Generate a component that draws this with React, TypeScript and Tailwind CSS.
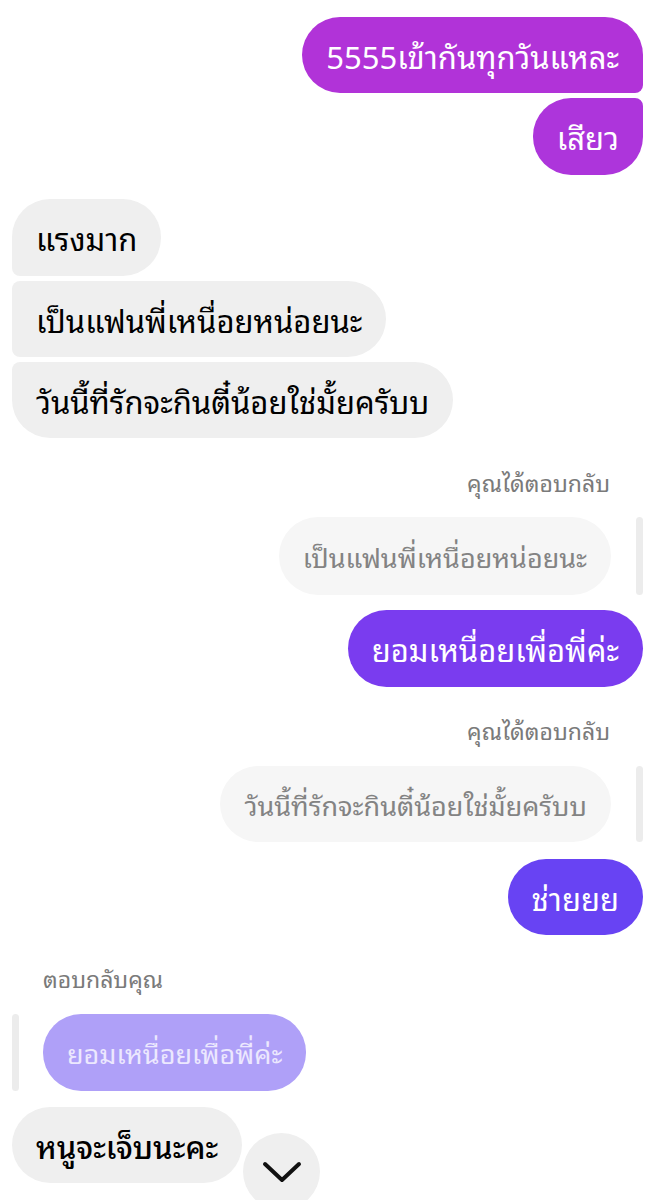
import React from "react";

const font = { fontFamily: '"Noto Sans Thai Looped", "Noto Sans", "Liberation Sans", sans-serif' };

function Bar() {
  return <div className="w-[7px] self-stretch rounded-full bg-[#ececec]" />;
}

export default function App() {
  return (
    <div className="relative w-[659px] h-[1200px] overflow-hidden bg-white" style={font}>
      <div className="flex flex-col pt-[17px] pr-[16px] pl-[12px]">
        <div className="flex flex-col items-end gap-[5px]">
          <div className="h-[76px] flex items-center px-[24px] bg-[#b133d8] text-white text-[31px] rounded-[38px] rounded-br-[8px]">
            5555เข้ากันทุกวันแหละ
          </div>
          <div className="h-[77px] flex items-center px-[24px] bg-[#ad35db] text-white text-[31px] rounded-[38px] rounded-tr-[8px]">
            เสียว
          </div>
        </div>

        <div className="flex flex-col items-start gap-[5px] mt-[24px]">
          <div className="h-[77px] flex items-center px-[24px] bg-[#efefef] text-black text-[31px] rounded-[38px] rounded-bl-[8px]">
            แรงมาก
          </div>
          <div className="h-[76px] flex items-center px-[24px] bg-[#efefef] text-black text-[31px] rounded-[38px] rounded-tl-[8px] rounded-bl-[8px]">
            เป็นแฟนพี่เหนื่อยหน่อยนะ
          </div>
          <div className="h-[76px] flex items-center px-[24px] bg-[#efefef] text-black text-[31px] rounded-[38px] rounded-tl-[8px]">
            วันนี้ที่รักจะกินตี๋น้อยใช่มั้ยครับบ
          </div>
        </div>

        <div className="flex justify-end mt-[28px] pr-[33px] h-[32px] items-center text-[23px] text-[#7a7a7a]">
          คุณได้ตอบกลับ
        </div>
        <div className="flex justify-end mt-[19px] gap-[25px]">
          <div className="h-[78px] flex items-center px-[24px] bg-[#f6f6f6] text-[#838383] text-[27px] rounded-[39px]">
            เป็นแฟนพี่เหนื่อยหน่อยนะ
          </div>
          <Bar />
        </div>
        <div className="flex justify-end mt-[15px]">
          <div className="h-[77px] flex items-center px-[24px] bg-[#7a3cef] text-white text-[31px] rounded-[39px]">
            ยอมเหนื่อยเพื่อพี่ค่ะ
          </div>
        </div>

        <div className="flex justify-end mt-[27px] pr-[33px] h-[32px] items-center text-[23px] text-[#7a7a7a]">
          คุณได้ตอบกลับ
        </div>
        <div className="flex justify-end mt-[20px] gap-[25px]">
          <div className="h-[76px] flex items-center px-[24px] bg-[#f6f6f6] text-[#838383] text-[27px] rounded-[38px]">
            วันนี้ที่รักจะกินตี๋น้อยใช่มั้ยครับบ
          </div>
          <Bar />
        </div>
        <div className="flex justify-end mt-[17px]">
          <div className="h-[76px] flex items-center px-[24px] bg-[#6843f3] text-white text-[31px] rounded-[38px]">
            ช่ายยย
          </div>
        </div>

        <div className="flex justify-start mt-[27px] pl-[31px] h-[32px] items-center text-[23px] text-[#7a7a7a]">
          ตอบกลับคุณ
        </div>
        <div className="flex justify-start mt-[20px] gap-[24px]">
          <Bar />
          <div className="h-[77px] flex items-center px-[24px] bg-[#afa0f8] text-[#ece8fe] text-[27px] rounded-[38px]">
            ยอมเหนื่อยเพื่อพี่ค่ะ
          </div>
        </div>
        <div className="flex justify-start mt-[16px]">
          <div className="h-[76px] flex items-center px-[24px] bg-[#efefef] text-black text-[31px] font-medium rounded-[38px]">
            หนูจะเจ็บนะคะ
          </div>
        </div>
      </div>

      <div className="absolute left-[243px] top-[1133px] w-[77px] h-[77px] rounded-full bg-[#efefef] flex items-center justify-center">
        <svg width="40" height="22" viewBox="0 0 40 22" fill="none">
          <path d="M3 3 L20 19 L37 3" stroke="#111" strokeWidth="4" strokeLinecap="round" strokeLinejoin="round" />
        </svg>
      </div>
    </div>
  );
}
